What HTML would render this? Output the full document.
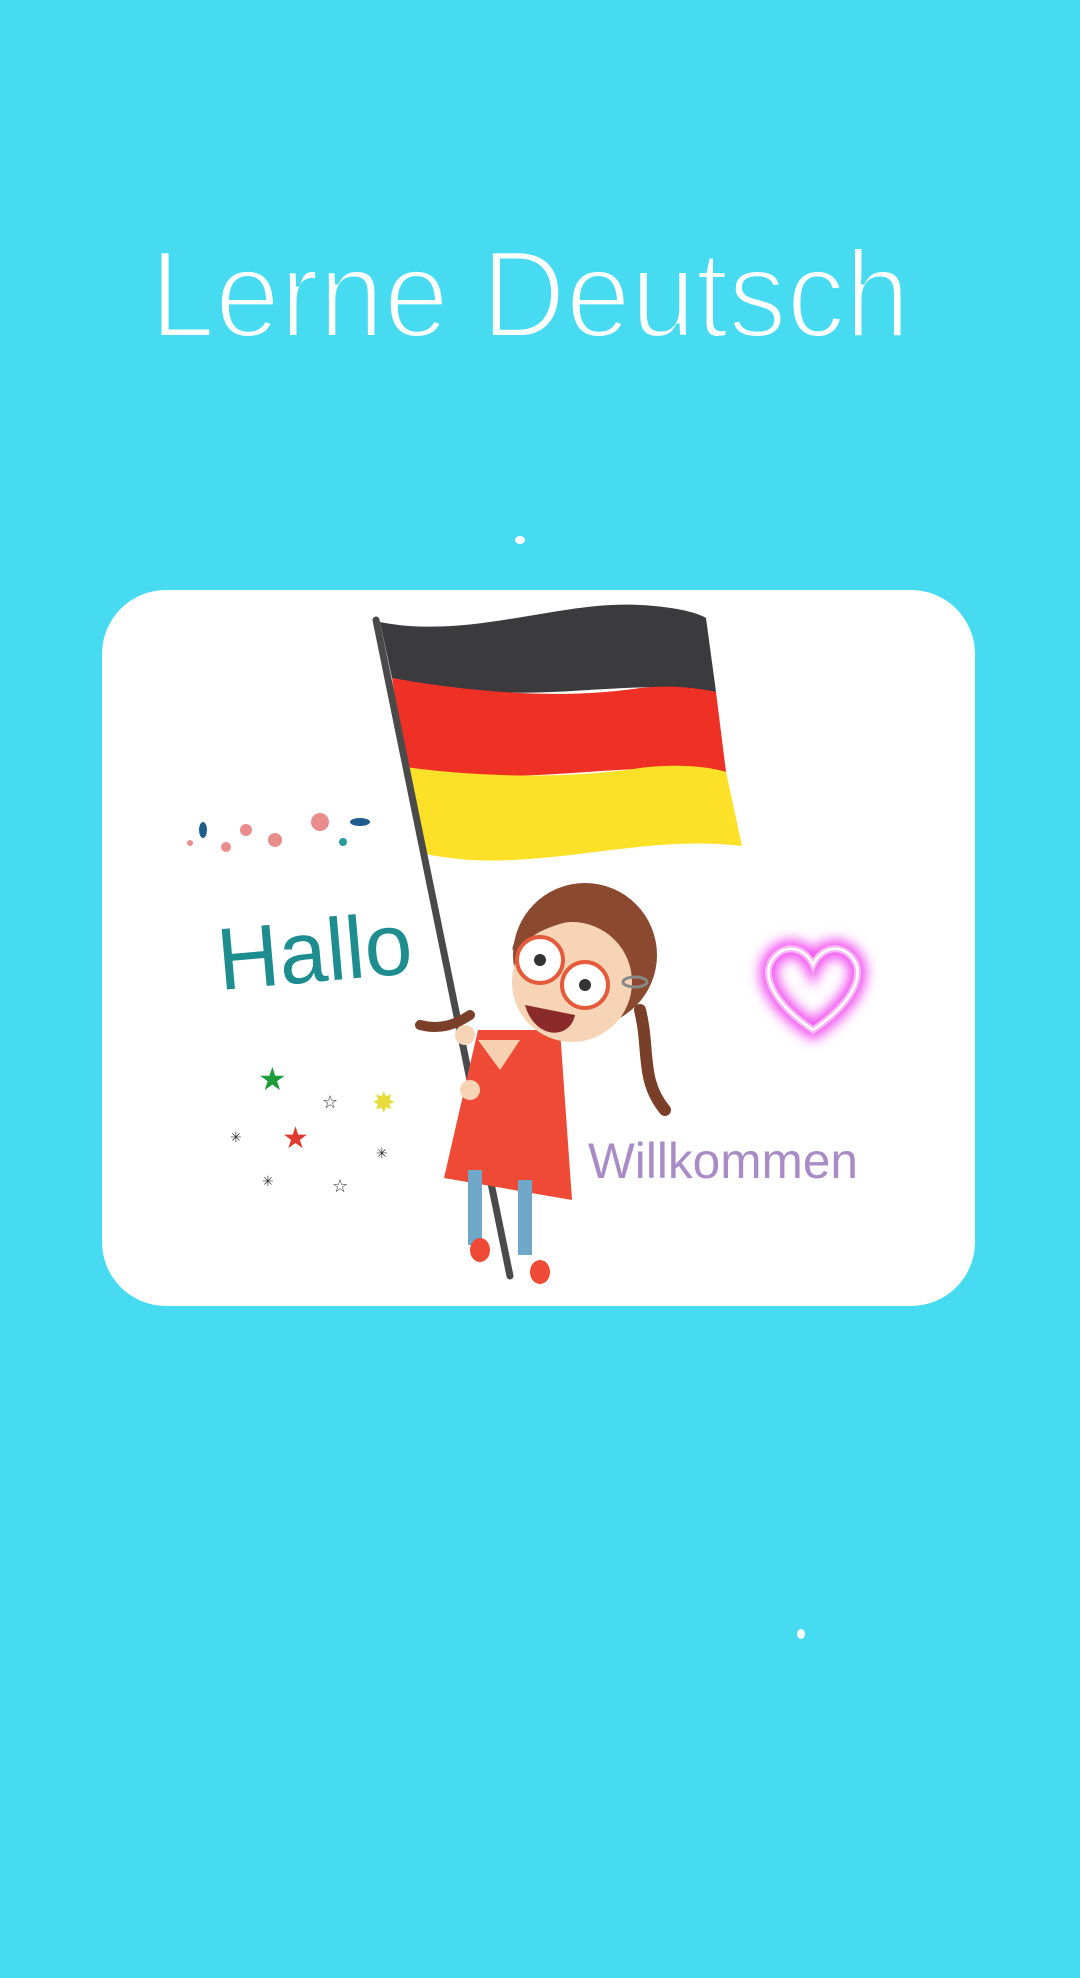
<!DOCTYPE html>
<html><head><meta charset="utf-8">
<style>html,body{margin:0;padding:0;background:#47dbf1;width:1080px;height:1978px;overflow:hidden}</style>
</head><body>
<svg width="1080" height="1978" viewBox="0 0 1080 1978" xmlns="http://www.w3.org/2000/svg">
<defs><filter id="glow" x="-50%" y="-50%" width="200%" height="200%"><feGaussianBlur stdDeviation="6"/></filter></defs>
<rect width="1080" height="1978" fill="#47dbf1"/>
<text x="150" y="337" font-family="Liberation Sans, sans-serif" font-size="124" fill="#fff" stroke="#47dbf1" stroke-width="4" paint-order="stroke" textLength="760" lengthAdjust="spacingAndGlyphs" style="paint-order:normal">Lerne Deutsch</text>
<ellipse cx="520" cy="540" rx="5" ry="4" fill="#fff"/>
<ellipse cx="801" cy="1634" rx="4" ry="5" fill="#fff"/>
<rect x="102" y="590" width="873" height="716" rx="64" fill="#fff"/>
<!-- flag -->
<path d="M380,622 C470,640 560,600 640,605 C680,607 700,614 706,618 L716,692 C640,678 560,700 470,690 C440,686 410,682 392,678 Z" fill="#3b3a3c"/>
<path d="M392,678 C470,692 560,700 640,688 C680,684 705,690 716,692 L726,772 C650,760 560,780 470,775 C440,773 420,770 405,767 Z" fill="#ee3124"/>
<path d="M405,767 C470,776 560,780 640,768 C690,762 720,770 726,772 L742,846 C650,835 560,865 470,860 C450,858 430,856 420,852 Z" fill="#fde128"/>
<line x1="376" y1="620" x2="510" y2="1276" stroke="#4a4a4a" stroke-width="7" stroke-linecap="round"/>
<!-- girl -->
<path d="M478,1030 L560,1030 L572,1200 L444,1178 Z" fill="#ee4a36"/>
<path d="M478,1040 L520,1040 L500,1070 Z" fill="#f7d0b0"/>
<rect x="468" y="1170" width="14" height="75" fill="#6fa8c9"/>
<rect x="518" y="1180" width="14" height="75" fill="#6fa8c9"/>
<ellipse cx="480" cy="1250" rx="10" ry="12" fill="#ee4a36"/>
<ellipse cx="540" cy="1272" rx="10" ry="12" fill="#ee4a36"/>
<circle cx="585" cy="955" r="72" fill="#8b4a2f"/>
<circle cx="572" cy="982" r="60" fill="#f8d4b6"/>
<path d="M512,950 C530,880 630,880 655,945 C620,910 560,910 512,950 Z" fill="#8b4a2f"/>
<circle cx="540" cy="960" r="23" fill="#fff" stroke="#e55a3a" stroke-width="4"/>
<circle cx="585" cy="985" r="23" fill="#fff" stroke="#e55a3a" stroke-width="4"/>
<circle cx="540" cy="960" r="6" fill="#333"/><circle cx="585" cy="985" r="6" fill="#333"/>
<path d="M525,1005 C535,1040 570,1040 575,1015 Z" fill="#8a2a2a"/>
<ellipse cx="635" cy="982" rx="12" ry="5" fill="none" stroke="#888" stroke-width="3"/>
<path d="M640,1010 C650,1050 640,1080 665,1110" stroke="#7a3f28" stroke-width="12" fill="none" stroke-linecap="round"/>
<path d="M470,1015 C455,1025 440,1030 420,1025" stroke="#7a3f28" stroke-width="10" fill="none" stroke-linecap="round"/>
<circle cx="465" cy="1035" r="10" fill="#f8d4b6"/><circle cx="470" cy="1090" r="10" fill="#f8d4b6"/>
<!-- text -->
<text x="220" y="990" font-family="Liberation Sans, sans-serif" font-size="88" fill="#1e8d8f" transform="rotate(-5 220 990)" textLength="195" lengthAdjust="spacingAndGlyphs">Hallo</text>
<text x="588" y="1178" font-family="Liberation Sans, sans-serif" font-size="50" fill="#a98bc6" textLength="270" lengthAdjust="spacingAndGlyphs">Willkommen</text>
<!-- heart -->
<path d="M813,1030 C772,1002 762,975 772,960 C784,942 805,947 813,965 C821,947 842,942 854,960 C864,975 854,1002 813,1030 Z" fill="none" stroke="#f14ff0" stroke-width="18" filter="url(#glow)"/>
<path d="M813,1030 C772,1002 762,975 772,960 C784,942 805,947 813,965 C821,947 842,942 854,960 C864,975 854,1002 813,1030 Z" fill="none" stroke="#f9b8f8" stroke-width="7"/>
<path d="M813,1030 C772,1002 762,975 772,960 C784,942 805,947 813,965 C821,947 842,942 854,960 C864,975 854,1002 813,1030 Z" fill="none" stroke="#fff" stroke-width="2.5"/>
<!-- flowers -->
<g fill="#e98c8c"><circle cx="320" cy="822" r="9"/><circle cx="246" cy="830" r="6"/><circle cx="275" cy="840" r="7"/><circle cx="226" cy="847" r="5"/><circle cx="190" cy="843" r="3"/></g>
<g fill="#1f5d8e"><ellipse cx="203" cy="830" rx="4" ry="8"/><ellipse cx="360" cy="822" rx="10" ry="4"/></g>
<circle cx="343" cy="842" r="4" fill="#2a9a9a"/>
<!-- stars -->
<text x="258" y="1090" font-size="32" fill="#1e9c3c" font-family="DejaVu Sans, sans-serif">★</text>
<text x="282" y="1148" font-size="30" fill="#e23a2f" font-family="DejaVu Sans, sans-serif">★</text>
<text x="372" y="1112" font-size="28" fill="#e7dc3a" font-family="DejaVu Sans, sans-serif">✸</text>
<text x="322" y="1108" font-size="18" fill="#333" font-family="DejaVu Sans, sans-serif">☆</text>
<text x="332" y="1192" font-size="18" fill="#333" font-family="DejaVu Sans, sans-serif">☆</text>
<text x="230" y="1142" font-size="14" fill="#333" font-family="DejaVu Sans, sans-serif">✳</text>
<text x="376" y="1158" font-size="14" fill="#333" font-family="DejaVu Sans, sans-serif">✳</text>
<text x="262" y="1186" font-size="14" fill="#333" font-family="DejaVu Sans, sans-serif">✳</text>
</svg>
</body></html>
